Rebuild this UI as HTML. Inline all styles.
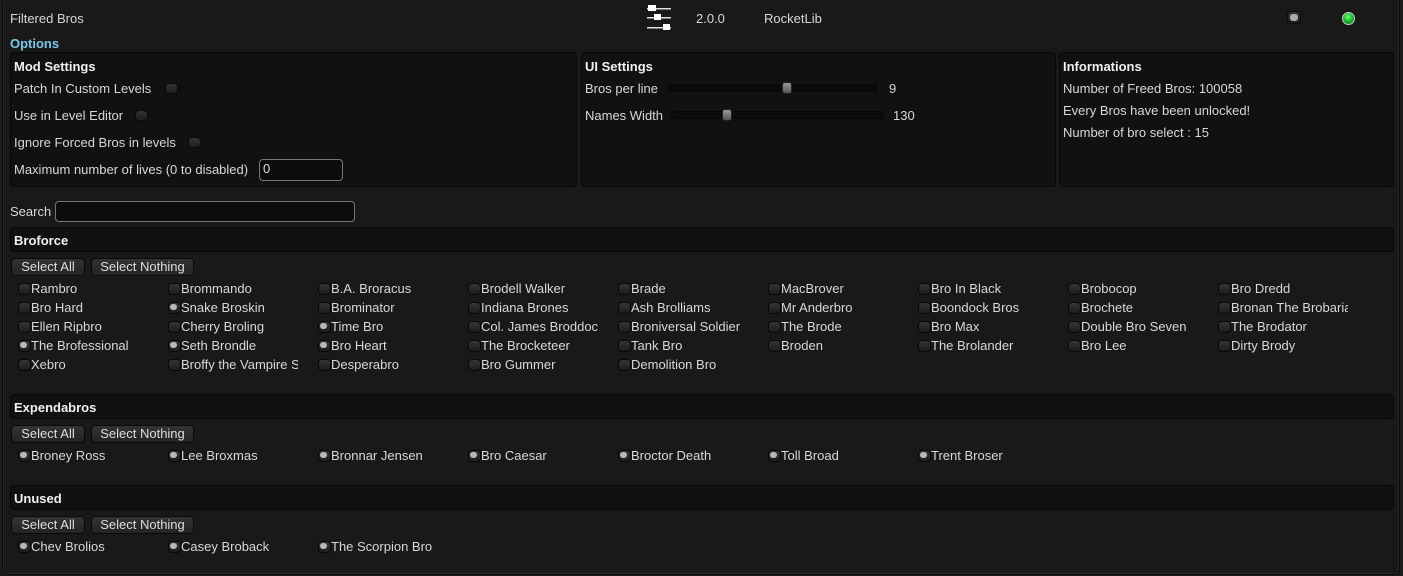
<!DOCTYPE html>
<html><head><meta charset="utf-8"><style>
*{margin:0;padding:0;box-sizing:border-box}
body{width:1403px;height:576px;background:#1c1c1c;font-family:"Liberation Sans",sans-serif;font-size:13px;color:#d8d8d8;position:relative;overflow:hidden}
.a{position:absolute;white-space:nowrap;line-height:15px}
.frame{position:absolute;left:2px;top:-2px;width:1398px;height:577px;border:1px solid #0a0a0a;border-radius:4px;background:#191919;box-shadow:inset 0 0 0 1px #262626}
.pn{position:absolute;background:#111;border:1px solid #070707;border-radius:4px}
.b{font-weight:bold;color:#f0f0f0}
.tg{position:absolute;width:13px;height:11px;border-radius:4px;background:linear-gradient(#333,#1e1e1e);border:1px solid #0a0a0a}
.inp{position:absolute;background:#0c0c0c;border:1px solid #777;border-radius:4px;color:#ddd;padding-left:3px;line-height:18px}
.btn{position:absolute;height:18px;border:1px solid #0a0a0a;border-radius:4px;background:linear-gradient(#333,#242424);color:#ddd;text-align:center;line-height:16px;top:0}
.i{position:absolute;width:130px;overflow:hidden;white-space:nowrap;line-height:15px;padding-left:13px}
.i:before{content:"";position:absolute;left:0;top:2px;width:11px;height:10px;border-radius:4px;background:linear-gradient(#353535,#1c1c1c);border:1px solid #080808}
.i.on:after{content:"";position:absolute;left:2px;top:4px;width:7px;height:6px;border-radius:3px;background:#b8b8b8}
.tr{position:absolute;height:8px;border-radius:4px;background:#0b0b0b;border:1px solid #060606}
.th{position:absolute;width:10px;height:12px;border-radius:3px;background:linear-gradient(#999,#555);border:1px solid #222}
</style></head><body>
<div class="frame"></div>
<div class="a" style="left:10px;top:11px">Filtered Bros</div>
<svg class="a" style="left:646px;top:4px" width="26" height="28" viewBox="0 0 26 28">
<rect x="1" y="4" width="24" height="1.5" fill="#ddd"/><rect x="2" y="1" width="8" height="6" fill="#fff"/>
<rect x="1" y="13" width="24" height="1.5" fill="#ddd"/><rect x="8" y="10" width="7" height="6" fill="#fff"/>
<rect x="1" y="23" width="24" height="1.5" fill="#ddd"/><rect x="17" y="20" width="7" height="6" fill="#fff"/>
</svg>
<div class="a" style="left:696px;top:11px">2.0.0</div>
<div class="a" style="left:764px;top:11px">RocketLib</div>
<div class="tg" style="left:1287px;top:11px;width:14px;height:13px"></div><div class="a" style="left:1290px;top:14px;width:8px;height:7px;border-radius:3px;background:#aaa"></div>
<div class="a" style="left:1342px;top:12px;width:13px;height:13px;border-radius:7px;background:radial-gradient(circle at 45% 35%,#7f7,#1a2 55%,#083);border:1px solid #ccc"></div>
<div class="a" style="left:10px;top:36px;color:#7cc8ea;font-weight:bold">Options</div>

<div class="pn" style="left:10px;top:52px;width:567px;height:135px"></div>
<div class="a b" style="left:14px;top:59px">Mod Settings</div>
<div class="a" style="left:14px;top:81px">Patch In Custom Levels</div><div class="tg" style="left:165px;top:83px"></div>
<div class="a" style="left:14px;top:108px">Use in Level Editor</div><div class="tg" style="left:135px;top:110px"></div>
<div class="a" style="left:14px;top:135px">Ignore Forced Bros in levels</div><div class="tg" style="left:188px;top:137px"></div>
<div class="a" style="left:14px;top:162px">Maximum number of lives (0 to disabled)</div>
<div class="inp" style="left:259px;top:159px;width:84px;height:22px">0</div>

<div class="pn" style="left:581px;top:52px;width:475px;height:135px"></div>
<div class="a b" style="left:585px;top:59px">UI Settings</div>
<div class="a" style="left:585px;top:81px">Bros per line</div>
<div class="tr" style="left:667px;top:84px;width:211px"></div><div class="th" style="left:782px;top:82px"></div>
<div class="a" style="left:889px;top:81px">9</div>
<div class="a" style="left:585px;top:108px">Names Width</div>
<div class="tr" style="left:671px;top:111px;width:213px"></div><div class="th" style="left:722px;top:109px"></div>
<div class="a" style="left:893px;top:108px">130</div>

<div class="pn" style="left:1059px;top:52px;width:335px;height:135px"></div>
<div class="a b" style="left:1063px;top:59px">Informations</div>
<div class="a" style="left:1063px;top:81px">Number of Freed Bros: 100058</div>
<div class="a" style="left:1063px;top:103px">Every Bros have been unlocked!</div>
<div class="a" style="left:1063px;top:125px">Number of bro select : 15</div>

<div class="a" style="left:10px;top:204px">Search</div>
<div class="inp" style="left:55px;top:201px;width:300px;height:21px"></div>

<div class="pn" style="left:10px;top:227px;width:1384px;height:25px"></div>
<div class="a b" style="left:14px;top:233px">Broforce</div>
<div style="position:absolute;left:0;top:258px"><div class="btn" style="left:11px;width:74px">Select All</div><div class="btn" style="left:91px;width:103px">Select Nothing</div></div>

<div style="position:absolute;left:0;top:281px">
<div class="i" style="left:18px;top:0">Rambro</div><div class="i" style="left:168px;top:0">Brommando</div><div class="i" style="left:318px;top:0">B.A. Broracus</div><div class="i" style="left:468px;top:0">Brodell Walker</div><div class="i" style="left:618px;top:0">Brade</div><div class="i" style="left:768px;top:0">MacBrover</div><div class="i" style="left:918px;top:0">Bro In Black</div><div class="i" style="left:1068px;top:0">Brobocop</div><div class="i" style="left:1218px;top:0">Bro Dredd</div>
<div class="i" style="left:18px;top:19px">Bro Hard</div><div class="i on" style="left:168px;top:19px">Snake Broskin</div><div class="i" style="left:318px;top:19px">Brominator</div><div class="i" style="left:468px;top:19px">Indiana Brones</div><div class="i" style="left:618px;top:19px">Ash Brolliams</div><div class="i" style="left:768px;top:19px">Mr Anderbro</div><div class="i" style="left:918px;top:19px">Boondock Bros</div><div class="i" style="left:1068px;top:19px">Brochete</div><div class="i" style="left:1218px;top:19px">Bronan The Brobarian</div>
<div class="i" style="left:18px;top:38px">Ellen Ripbro</div><div class="i" style="left:168px;top:38px">Cherry Broling</div><div class="i on" style="left:318px;top:38px">Time Bro</div><div class="i" style="left:468px;top:38px">Col. James Broddock</div><div class="i" style="left:618px;top:38px">Broniversal Soldier</div><div class="i" style="left:768px;top:38px">The Brode</div><div class="i" style="left:918px;top:38px">Bro Max</div><div class="i" style="left:1068px;top:38px">Double Bro Seven</div><div class="i" style="left:1218px;top:38px">The Brodator</div>
<div class="i on" style="left:18px;top:57px">The Brofessional</div><div class="i on" style="left:168px;top:57px">Seth Brondle</div><div class="i on" style="left:318px;top:57px">Bro Heart</div><div class="i" style="left:468px;top:57px">The Brocketeer</div><div class="i" style="left:618px;top:57px">Tank Bro</div><div class="i" style="left:768px;top:57px">Broden</div><div class="i" style="left:918px;top:57px">The Brolander</div><div class="i" style="left:1068px;top:57px">Bro Lee</div><div class="i" style="left:1218px;top:57px">Dirty Brody</div>
<div class="i" style="left:18px;top:76px">Xebro</div><div class="i" style="left:168px;top:76px">Broffy the Vampire Slayer</div><div class="i" style="left:318px;top:76px">Desperabro</div><div class="i" style="left:468px;top:76px">Bro Gummer</div><div class="i" style="left:618px;top:76px">Demolition Bro</div>
</div>

<div class="pn" style="left:10px;top:394px;width:1384px;height:25px"></div>
<div class="a b" style="left:14px;top:400px">Expendabros</div>
<div style="position:absolute;left:0;top:425px"><div class="btn" style="left:11px;width:74px">Select All</div><div class="btn" style="left:91px;width:103px">Select Nothing</div></div>
<div style="position:absolute;left:0;top:448px">
<div class="i on" style="left:18px;top:0">Broney Ross</div><div class="i on" style="left:168px;top:0">Lee Broxmas</div><div class="i on" style="left:318px;top:0">Bronnar Jensen</div><div class="i on" style="left:468px;top:0">Bro Caesar</div><div class="i on" style="left:618px;top:0">Broctor Death</div><div class="i on" style="left:768px;top:0">Toll Broad</div><div class="i on" style="left:918px;top:0">Trent Broser</div>
</div>

<div class="pn" style="left:10px;top:485px;width:1384px;height:25px"></div>
<div class="a b" style="left:14px;top:491px">Unused</div>
<div style="position:absolute;left:0;top:516px"><div class="btn" style="left:11px;width:74px">Select All</div><div class="btn" style="left:91px;width:103px">Select Nothing</div></div>
<div style="position:absolute;left:0;top:539px">
<div class="i on" style="left:18px;top:0">Chev Brolios</div><div class="i on" style="left:168px;top:0">Casey Broback</div><div class="i on" style="left:318px;top:0">The Scorpion Bro</div>
</div>
</body></html>
